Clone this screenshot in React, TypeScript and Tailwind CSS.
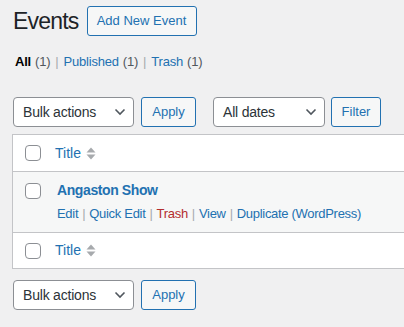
import React from "react";

const font = { fontFamily: '"Liberation Sans", Arial, sans-serif' };

function Chevron() {
  return (
    <svg width="12" height="8" viewBox="0 0 12 8" className="shrink-0">
      <path d="M1.5 1.5 L6 6 L10.5 1.5" fill="none" stroke="#50575e" strokeWidth="1.6" />
    </svg>
  );
}

function Select({ label, w }: { label: string; w: string }) {
  return (
    <div
      className={`${w} h-[30px] flex items-center justify-between pl-[9px] pr-[7px] bg-white border border-[#8c8f94] rounded-[4px] text-[14px] tracking-[-0.2px] text-[#2c3338]`}
    >
      <span>{label}</span>
      <Chevron />
    </div>
  );
}

function Btn({ label, w }: { label: string; w: string }) {
  return (
    <div
      className={`${w} h-[30px] flex items-center justify-center bg-[#f6f7f7] border border-[#2271b1] rounded-[3px] text-[13px] text-[#2271b1]`}
    >
      {label}
    </div>
  );
}

function Checkbox() {
  return <div className="w-[16px] h-[16px] bg-white border border-[#8c8f94] rounded-[4px] shrink-0" />;
}

function SortIcon() {
  return (
    <svg width="10" height="13" viewBox="0 0 10 13" className="ml-[5px]">
      <path d="M5 0.5 L9.5 5.5 L0.5 5.5 Z" fill="#a7aaad" />
      <path d="M5 12.5 L9.5 7.5 L0.5 7.5 Z" fill="#a7aaad" />
    </svg>
  );
}

function TitleHead({ h }: { h: string }) {
  return (
    <div className={`${h} flex items-center pl-[12px]`}>
      <Checkbox />
      <div className="flex items-center ml-[14px] text-[14px] text-[#2271b1]">
        <span>Title</span>
        <SortIcon />
      </div>
    </div>
  );
}

const Sep = () => <span className="text-[#a7aaad] mx-[4px]">|</span>;
const Sep2 = () => <span className="text-[#a7aaad] mx-[5px]">|</span>;

export default function App() {
  return (
    <div className="w-[404px] h-[327px] overflow-hidden bg-[#f0f0f1] pl-[13px]" style={font}>
      <div className="flex items-center pt-[6px]">
        <h1 className="text-[23px] leading-[30px] text-[#1d2327] font-normal tracking-[-0.8px]">Events</h1>
        <div className="ml-[8px] h-[30px] w-[110px] flex items-center justify-center bg-[#f6f7f7] border border-[#2271b1] rounded-[3px] text-[13px] text-[#2271b1]">
          Add New Event
        </div>
      </div>

      <div className="mt-[16px] h-[20px] flex items-center text-[13px] pl-[2px] tracking-[-0.2px]">
        <span className="font-bold text-[#000]">All</span>
        <span className="text-[#50575e] ml-[4px]">(1)</span>
        <Sep2 />
        <span className="text-[#2271b1]">Published</span>
        <span className="text-[#50575e] ml-[4px]">(1)</span>
        <Sep2 />
        <span className="text-[#2271b1]">Trash</span>
        <span className="text-[#50575e] ml-[4px]">(1)</span>
      </div>

      <div className="mt-[25px] flex items-center">
        <Select label="Bulk actions" w="w-[121px]" />
        <div className="ml-[7px]">
          <Btn label="Apply" w="w-[55px]" />
        </div>
        <div className="ml-[17px]">
          <Select label="All dates" w="w-[112px]" />
        </div>
        <div className="ml-[6px]">
          <Btn label="Filter" w="w-[50px]" />
        </div>
      </div>

      <div className="mt-[7px] -ml-[1px] w-[420px] bg-white border border-[#c3c4c7]">
        <div className="border-b border-[#c3c4c7]">
          <TitleHead h="h-[36px]" />
        </div>
        <div className="h-[60px] bg-[#f6f7f7] flex items-start pl-[12px] pt-[11px]">
          <Checkbox />
          <div className="ml-[16px] -mt-[4px]">
            <div className="text-[14px] font-bold text-[#2271b1] leading-[22px] tracking-[-0.4px]">Angaston Show</div>
            <div className="text-[13px] leading-[18px] mt-[4px] text-[#2271b1] flex tracking-[-0.3px]">
              <span>Edit</span>
              <Sep />
              <span>Quick Edit</span>
              <Sep />
              <span className="text-[#b32d2e]">Trash</span>
              <Sep />
              <span>View</span>
              <Sep />
              <span>Duplicate (WordPress)</span>
            </div>
          </div>
        </div>
        <div className="border-t border-[#c3c4c7]">
          <TitleHead h="h-[35px]" />
        </div>
      </div>

      <div className="mt-[11px] flex items-center">
        <Select label="Bulk actions" w="w-[121px]" />
        <div className="ml-[7px]">
          <Btn label="Apply" w="w-[55px]" />
        </div>
      </div>
    </div>
  );
}
